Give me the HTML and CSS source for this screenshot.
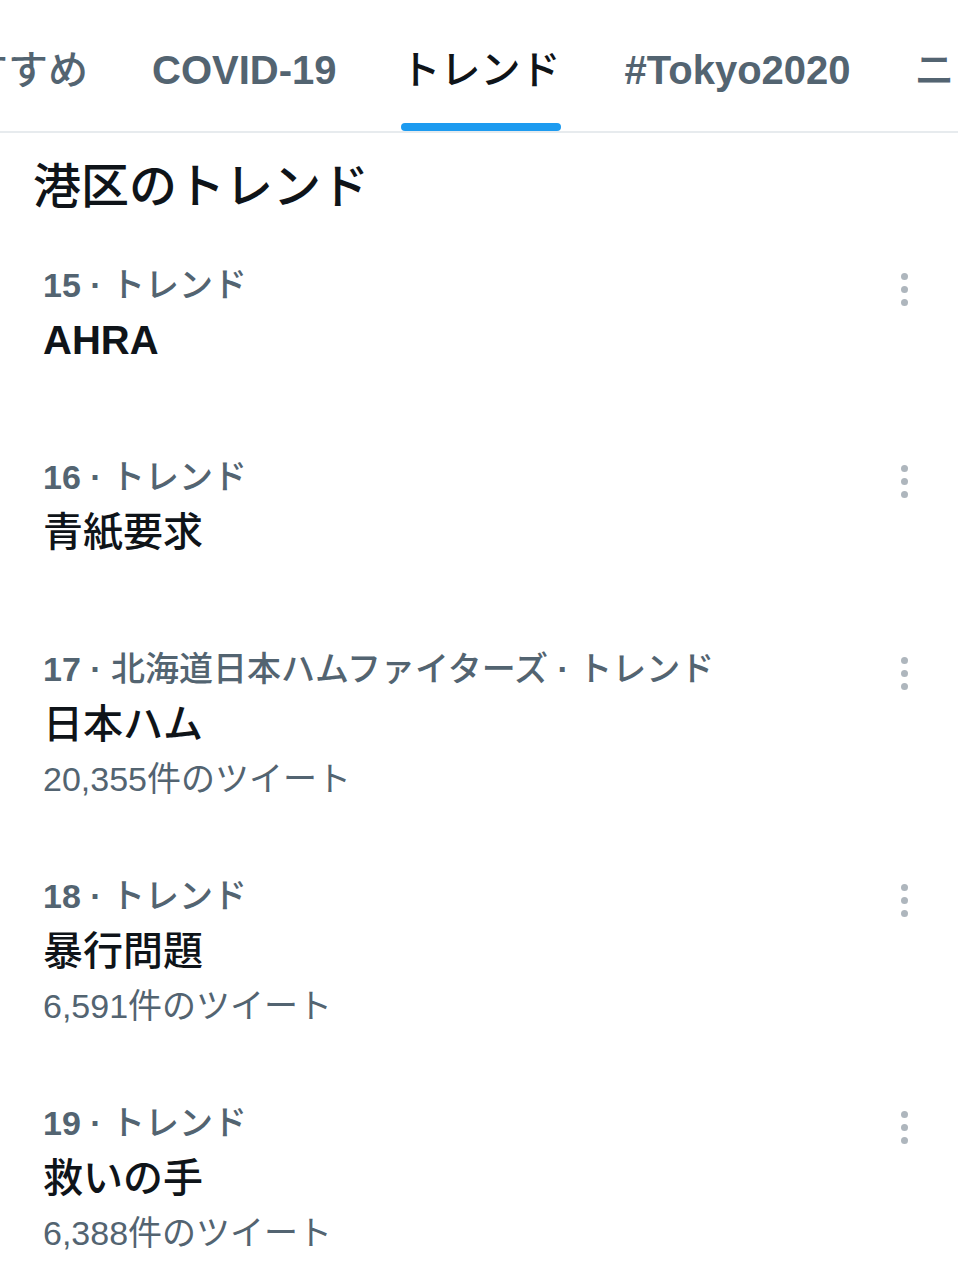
FILE: index.html
```html
<!DOCTYPE html>
<html lang="ja">
<head>
<meta charset="utf-8">
<title>トレンド</title>
<link rel="stylesheet" href="styles.css">
</head>
<body>
<div class="page">
  <nav class="tabs">
    <div class="tab"><span class="tab-label">おすすめ</span><span class="tab-bar"></span></div>
    <div class="tab"><span class="tab-label latin">COVID-19</span><span class="tab-bar"></span></div>
    <div class="tab active"><span class="tab-label">トレンド</span><span class="tab-bar"></span></div>
    <div class="tab"><span class="tab-label latin">#Tokyo2020</span><span class="tab-bar"></span></div>
    <div class="tab"><span class="tab-label">ニュース</span><span class="tab-bar"></span></div>
  </nav>

  <h1 class="heading">港区のトレンド</h1>

  <section class="trends">
    <div class="trend">
      <div class="trend-body">
        <div class="meta"><span class="num">15 ·</span> トレンド</div>
        <div class="title latin">AHRA</div>
      </div>
      <div class="more"><i></i><i></i><i></i></div>
    </div>
    <div class="trend">
      <div class="trend-body">
        <div class="meta"><span class="num">16 ·</span> トレンド</div>
        <div class="title">青紙要求</div>
      </div>
      <div class="more"><i></i><i></i><i></i></div>
    </div>
    <div class="trend">
      <div class="trend-body">
        <div class="meta"><span class="num">17 ·</span> 北海道日本ハムファイターズ <span class="num">·</span> トレンド</div>
        <div class="title">日本ハム</div>
        <div class="count">20,355件のツイート</div>
      </div>
      <div class="more"><i></i><i></i><i></i></div>
    </div>
    <div class="trend">
      <div class="trend-body">
        <div class="meta"><span class="num">18 ·</span> トレンド</div>
        <div class="title">暴行問題</div>
        <div class="count">6,591件のツイート</div>
      </div>
      <div class="more"><i></i><i></i><i></i></div>
    </div>
    <div class="trend">
      <div class="trend-body">
        <div class="meta"><span class="num">19 ·</span> トレンド</div>
        <div class="title">救いの手</div>
        <div class="count">6,388件のツイート</div>
      </div>
      <div class="more"><i></i><i></i><i></i></div>
    </div>
  </section>
</div>
</body>
</html>
```

FILE: styles.css
```css
html, body {
  margin: 0;
  padding: 0;
  background: #ffffff;
}

body {
  font-family: "Liberation Sans", "Noto Sans CJK JP", sans-serif;
  color: #0f1419;
  overflow: hidden;
}

.page {
  width: 958px;
  overflow: hidden;
}

.tabs {
  display: flex;
  height: 131px;
  border-bottom: 2px solid #e7ebee;
  margin-left: -104px;
  white-space: nowrap;
}

.tab {
  display: flex;
  flex-direction: column;
  align-items: stretch;
  padding: 0 32px;
  flex: none;
}

.tab-label {
  display: block;
  padding-top: 46px;
  font-size: 40px;
  line-height: 48px;
  font-weight: 500;
  color: #536471;
}

.tab-label.latin {
  font-weight: 700;
}

.tab-bar {
  display: block;
  margin-top: auto;
  height: 8px;
  border-radius: 4px;
  background: transparent;
}

.tab.active .tab-label {
  color: #0f1419;
}

.tab.active .tab-bar {
  background: #1d9bf0;
}

.heading {
  margin: 0;
  padding: 24px 0 10px 33px;
  font-size: 48px;
  line-height: 60px;
  font-weight: 500;
  color: #0f1419;
}

.trends {
  display: flex;
  flex-direction: column;
}

.trend {
  display: flex;
  justify-content: space-between;
  align-items: flex-start;
  box-sizing: border-box;
  min-height: 192px;
  padding: 36px 40px 37px 43px;
}

.trend-body {
  display: flex;
  flex-direction: column;
  gap: 8px;
}

.meta {
  font-size: 34px;
  line-height: 44px;
  font-weight: 500;
  color: #536471;
  white-space: nowrap;
}

.meta .num {
  font-weight: 700;
}

.title {
  font-size: 40px;
  line-height: 50px;
  font-weight: 500;
  color: #0f1419;
}

.title.latin {
  font-weight: 700;
}

.count {
  font-size: 34px;
  line-height: 44px;
  color: #536471;
}

.more {
  display: flex;
  flex-direction: column;
  align-items: center;
  gap: 6px;
  padding-top: 10px;
  width: 28px;
}

.more i {
  display: block;
  width: 7px;
  height: 7px;
  border-radius: 50%;
  background: #aeb6bd;
}
```
